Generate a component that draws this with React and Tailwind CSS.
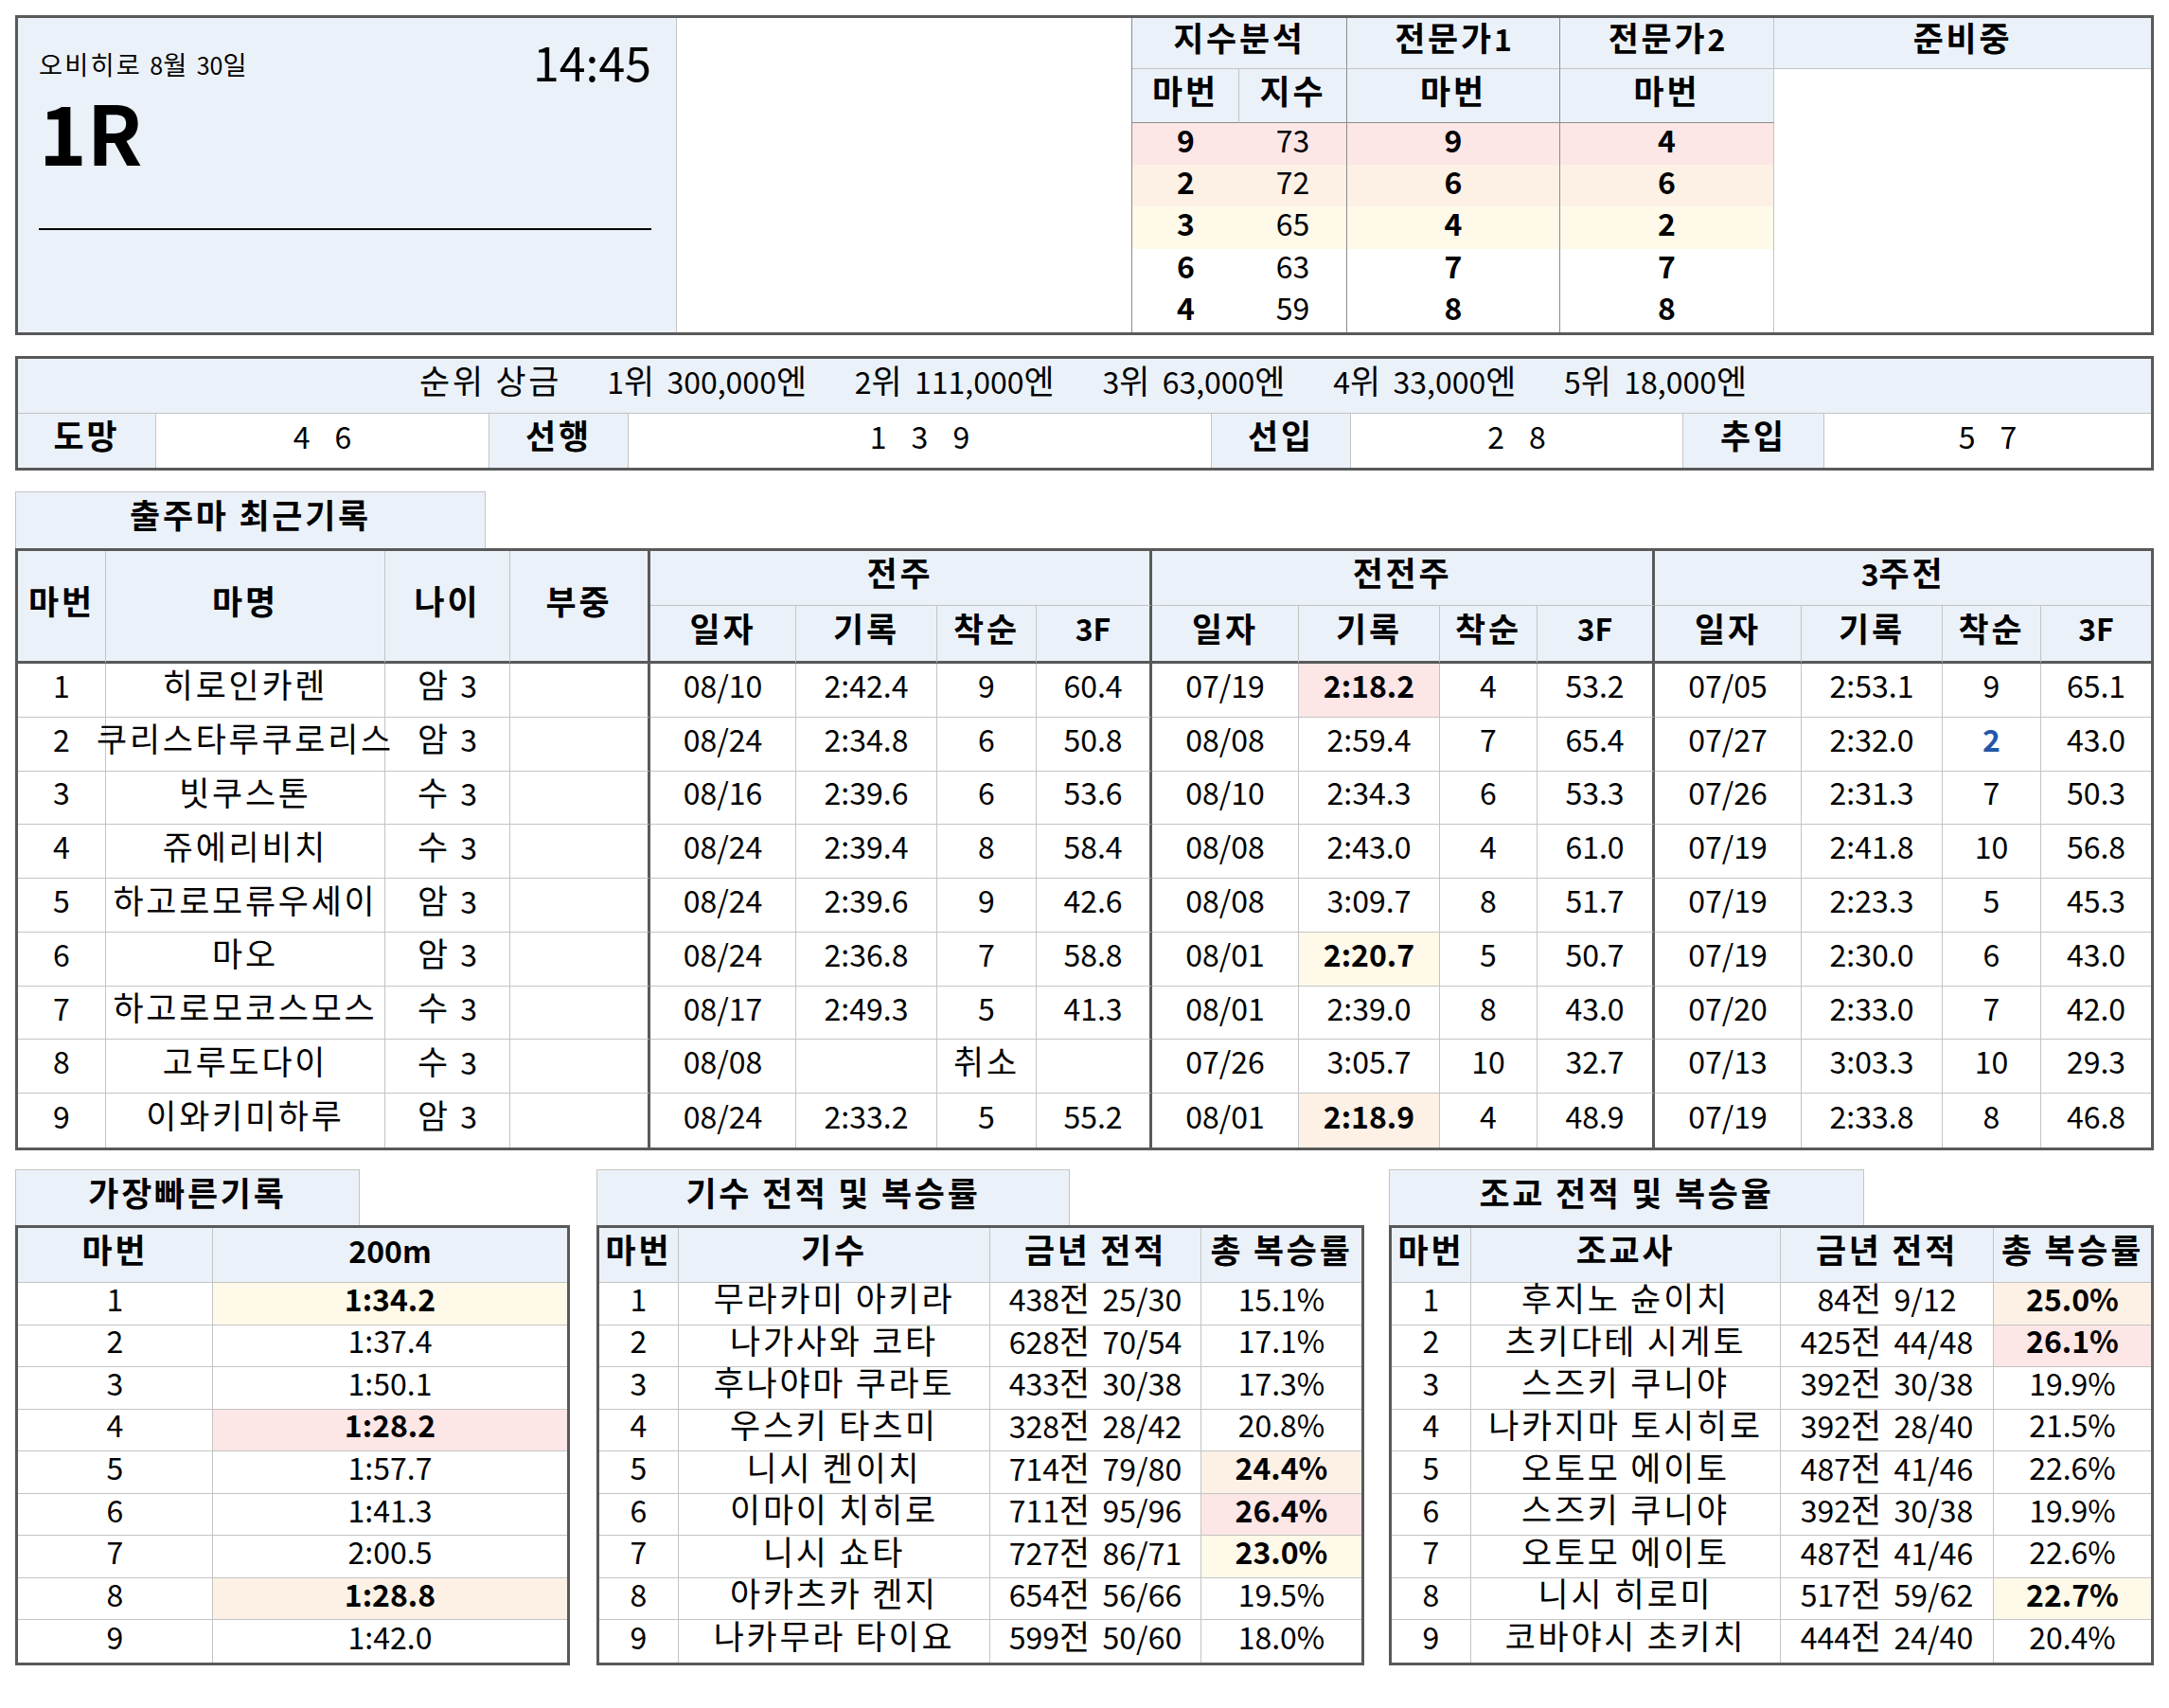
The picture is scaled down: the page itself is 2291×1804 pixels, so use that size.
import React from 'react';

const HL = { p: 'bg-[#fce6e6]', o: 'bg-[#fdf1e5]', y: 'bg-[#fef9e8]', '': '' };
const HDR = 'bg-[#ebf1f8]';
const FLEXC = 'flex flex-wrap content-center justify-center items-baseline whitespace-pre leading-none';
const CELL = `${FLEXC} border-[#c4c4c4] pb-[12px] min-h-0`;
const THICK_R = 'border-r-[3px] border-r-[#595959]';
const THICK_B = 'border-b-[3px] border-b-[#595959]';

const TOKEN = /[\uAC00-\uD7A3]+ *|[^\uAC00-\uD7A3]+/g;

function K({ t }) {
  if (typeof t !== 'string' || t === '') return null;
  const toks = t.match(TOKEN) || [];
  return (
    <>
      {toks.map((p, i) =>
        /[\uAC00-\uD7A3]/.test(p) ? (
          <span key={i} className="text-[1.09em] tracking-[0.08em] whitespace-pre">
            {p}
          </span>
        ) : (
          <span key={i} className="whitespace-pre">
            {p}
          </span>
        )
      )}
    </>
  );
}

function TopBox() {
  const rows = [
    ['9', '73', '9', '4', 'p'],
    ['2', '72', '6', '6', 'o'],
    ['3', '65', '4', '2', 'y'],
    ['6', '63', '7', '7', ''],
    ['4', '59', '8', '8', ''],
  ];
  const h = `bg-[#ebf1f8] ${FLEXC} font-bold text-[32px] border-[#c4c4c4] pb-[12px]`;
  const d = 'flex items-center justify-center text-[32px] leading-none pb-[10px] min-h-0';
  return (
    <div className="h-[338px] border-[3px] border-[#595959] grid grid-cols-[696px_481px_113px_114px_225px_226px_1fr] grid-rows-[54px_57px_repeat(5,minmax(0,1fr))]">
      <div className="row-span-7 bg-[#ebf1f8] border-r border-[#c4c4c4] pl-[22px] pr-[26px] pt-[20px]">
        <div className="flex justify-between items-start">
          <div className="text-[25px] leading-none mt-[15px]">
            <K t="오비히로 8월 30일" />
          </div>
          <div className="text-[50px] leading-none">14:45</div>
        </div>
        <div className="text-[86px] font-bold leading-none mt-[6px]">1R</div>
        <div className="h-[2px] bg-black mt-[60px]"></div>
      </div>
      <div className="row-span-7 border-r border-[#8c8c8c]"></div>
      <div className={`col-span-2 ${h} border-r border-b border-r-[#8c8c8c]`}><K t="지수분석" /></div>
      <div className={`${h} border-r border-b border-r-[#8c8c8c]`}><K t="전문가1" /></div>
      <div className={`${h} border-r border-b`}><K t="전문가2" /></div>
      <div className={`${h} border-b`}><K t="준비중" /></div>
      <div className={`${h} border-r border-b border-b-[#8c8c8c]`}><K t="마번" /></div>
      <div className={`${h} border-r border-b border-r-[#8c8c8c] border-b-[#8c8c8c]`}><K t="지수" /></div>
      <div className={`${h} border-r border-b border-r-[#8c8c8c] border-b-[#8c8c8c]`}><K t="마번" /></div>
      <div className={`${h} border-r border-b border-b-[#8c8c8c]`}><K t="마번" /></div>
      <div className="row-span-6"></div>
      {rows.map((r, i) => (
        <React.Fragment key={i}>
          <div className={`${d} font-bold ${HL[r[4]]}`}>{r[0]}</div>
          <div className={`${d} border-r border-[#8c8c8c] ${HL[r[4]]}`}>{r[1]}</div>
          <div className={`${d} font-bold border-r border-[#8c8c8c] ${HL[r[4]]}`}>{r[2]}</div>
          <div className={`${d} font-bold border-r border-[#c4c4c4] ${HL[r[4]]}`}>{r[3]}</div>
        </React.Fragment>
      ))}
    </div>
  );
}

function Prize() {
  const cats = [
    ['도망', ['4', '6']],
    ['선행', ['1', '3', '9']],
    ['선입', ['2', '8']],
    ['추입', ['5', '7']],
  ];
  const items = ['순위 상금', '1위 300,000엔', '2위 111,000엔', '3위 63,000엔', '4위 33,000엔', '5위 18,000엔'];
  return (
    <div className="mt-[22px] h-[121px] border-[3px] border-[#595959] grid grid-cols-[146px_352px_147px_616px_147px_351px_149px_1fr] grid-rows-[58px_1fr]">
      <div className="col-span-8 bg-[#ebf1f8] border-b border-[#c4c4c4] flex items-center justify-center gap-[48px] text-[32px] leading-none whitespace-nowrap pb-[12px]">
        {items.map((t) => (
          <div key={t} className="flex items-baseline">
            <K t={t} />
          </div>
        ))}
      </div>
      {cats.map(([label, vals], i) => (
        <React.Fragment key={label}>
          <div className={`bg-[#ebf1f8] border-r border-[#c4c4c4] ${FLEXC} font-bold text-[32px] pb-[12px]`}>
            <K t={label} />
          </div>
          <div className={`flex items-center justify-center gap-[26px] text-[32px] leading-none pb-[12px] ${i < 3 ? 'border-r border-[#c4c4c4]' : ''}`}>
            {vals.map((v) => (
              <span key={v}>{v}</span>
            ))}
          </div>
        </React.Fragment>
      ))}
    </div>
  );
}

const horses = [
  ['1', '히로인카렌', '암 3', '', ['08/10', '2:42.4', '9', '60.4'], ['07/19', '2:18.2', '4', '53.2'], ['07/05', '2:53.1', '9', '65.1']],
  ['2', '쿠리스타루쿠로리스', '암 3', '', ['08/24', '2:34.8', '6', '50.8'], ['08/08', '2:59.4', '7', '65.4'], ['07/27', '2:32.0', '2', '43.0']],
  ['3', '빗쿠스톤', '수 3', '', ['08/16', '2:39.6', '6', '53.6'], ['08/10', '2:34.3', '6', '53.3'], ['07/26', '2:31.3', '7', '50.3']],
  ['4', '쥬에리비치', '수 3', '', ['08/24', '2:39.4', '8', '58.4'], ['08/08', '2:43.0', '4', '61.0'], ['07/19', '2:41.8', '10', '56.8']],
  ['5', '하고로모류우세이', '암 3', '', ['08/24', '2:39.6', '9', '42.6'], ['08/08', '3:09.7', '8', '51.7'], ['07/19', '2:23.3', '5', '45.3']],
  ['6', '마오', '암 3', '', ['08/24', '2:36.8', '7', '58.8'], ['08/01', '2:20.7', '5', '50.7'], ['07/19', '2:30.0', '6', '43.0']],
  ['7', '하고로모코스모스', '수 3', '', ['08/17', '2:49.3', '5', '41.3'], ['08/01', '2:39.0', '8', '43.0'], ['07/20', '2:33.0', '7', '42.0']],
  ['8', '고루도다이', '수 3', '', ['08/08', '', '취소', ''], ['07/26', '3:05.7', '10', '32.7'], ['07/13', '3:03.3', '10', '29.3']],
  ['9', '이와키미하루', '암 3', '', ['08/24', '2:33.2', '5', '55.2'], ['08/01', '2:18.9', '4', '48.9'], ['07/19', '2:33.8', '8', '46.8']],
];

const mainHL = { '0-9': 'p', '5-9': 'y', '8-9': 'o' };

const COL_R = [
  'border-r', 'border-r', 'border-r', 'border-r-[3px] border-r-[#595959]',
  'border-r', 'border-r', 'border-r', 'border-r-[3px] border-r-[#595959]',
  'border-r', 'border-r', 'border-r', 'border-r-[3px] border-r-[#595959]',
  'border-r', 'border-r', 'border-r', '',
];

function MainTable() {
  const subs = ['일자', '기록', '착순', '3F'];
  return (
    <div>
      <div className={`mt-[22px] w-[497px] h-[60px] bg-[#ebf1f8] border border-b-0 border-[#c4c4c4] ${FLEXC} font-bold text-[32px] pb-[12px]`}>
        <K t="출주마 최근기록" />
      </div>
      <div className="h-[636px] border-[3px] border-[#595959] grid grid-cols-[93px_295px_132px_148px_154px_149px_105px_122px_155px_149px_103px_124px_155px_149px_104px_1fr] grid-rows-[58px_61px_repeat(9,minmax(0,1fr))] text-[32px]">
        {['마번', '마명', '나이', '부중'].map((t, i) => (
          <div key={t} className={`row-span-2 ${HDR} ${CELL} font-bold ${COL_R[i]} ${THICK_B}`}>
            <K t={t} />
          </div>
        ))}
        <div className={`col-span-4 ${HDR} ${CELL} font-bold border-b ${THICK_R}`}><K t="전주" /></div>
        <div className={`col-span-4 ${HDR} ${CELL} font-bold border-b ${THICK_R}`}><K t="전전주" /></div>
        <div className={`col-span-4 ${HDR} ${CELL} font-bold border-b`}><K t="3주전" /></div>
        {[0, 1, 2].map((g) =>
          subs.map((s, j) => (
            <div key={`${g}-${j}`} className={`${HDR} ${CELL} font-bold ${COL_R[4 + g * 4 + j]} ${THICK_B}`}>
              <K t={s} />
            </div>
          ))
        )}
        {horses.map((h, r) => {
          const vals = [h[0], h[1], h[2], h[3], ...h[4], ...h[5], ...h[6]];
          return vals.map((v, c) => {
            const hk = mainHL[`${r}-${c}`] || '';
            const blue = r === 1 && c === 14;
            const bold = hk !== '' || blue;
            return (
              <div
                key={`${r}-${c}`}
                className={`${CELL} ${COL_R[c]} ${r < 8 ? 'border-b' : ''} ${HL[hk]} ${bold ? 'font-bold' : ''} ${blue ? 'text-[#2356a8]' : ''}`}
              >
                <K t={v} />
              </div>
            );
          });
        })}
      </div>
    </div>
  );
}

function BottomTable({ title, titleW, tableW, gridCls, headers, rows, hlCol }) {
  const n = headers.length;
  return (
    <div style={{ width: tableW }} className="flex-none">
      <div
        style={{ width: titleW }}
        className={`h-[59px] bg-[#ebf1f8] border border-b-0 border-[#c4c4c4] ${FLEXC} font-bold text-[32px] pb-[12px]`}
      >
        <K t={title} />
      </div>
      <div className={`h-[465px] border-[3px] border-[#595959] grid ${gridCls} text-[32px]`}>
        {headers.map((t, i) => (
          <div key={t} className={`${HDR} ${CELL} font-bold border-b ${i < n - 1 ? 'border-r' : ''}`}>
            <K t={t} />
          </div>
        ))}
        {rows.map((row, r) => {
          const hk = row[n] || '';
          return row.slice(0, n).map((v, c) => (
            <div
              key={`${r}-${c}`}
              className={`${CELL} ${c < n - 1 ? 'border-r' : ''} ${r < 8 ? 'border-b' : ''} ${c === hlCol ? HL[hk] : ''} ${c === hlCol && hk ? 'font-bold' : ''}`}
            >
              <K t={v} />
            </div>
          ));
        })}
      </div>
    </div>
  );
}

const fastest = [
  ['1', '1:34.2', 'y'], ['2', '1:37.4'], ['3', '1:50.1'], ['4', '1:28.2', 'p'], ['5', '1:57.7'],
  ['6', '1:41.3'], ['7', '2:00.5'], ['8', '1:28.8', 'o'], ['9', '1:42.0'],
];

const jockeys = [
  ['1', '무라카미 아키라', '438전 25/30', '15.1%'],
  ['2', '나가사와 코타', '628전 70/54', '17.1%'],
  ['3', '후나야마 쿠라토', '433전 30/38', '17.3%'],
  ['4', '우스키 타츠미', '328전 28/42', '20.8%'],
  ['5', '니시 켄이치', '714전 79/80', '24.4%', 'o'],
  ['6', '이마이 치히로', '711전 95/96', '26.4%', 'p'],
  ['7', '니시 쇼타', '727전 86/71', '23.0%', 'y'],
  ['8', '아카츠카 켄지', '654전 56/66', '19.5%'],
  ['9', '나카무라 타이요', '599전 50/60', '18.0%'],
];

const trainers = [
  ['1', '후지노 슌이치', '84전 9/12', '25.0%', 'o'],
  ['2', '츠키다테 시게토', '425전 44/48', '26.1%', 'p'],
  ['3', '스즈키 쿠니야', '392전 30/38', '19.9%'],
  ['4', '나카지마 토시히로', '392전 28/40', '21.5%'],
  ['5', '오토모 에이토', '487전 41/46', '22.6%'],
  ['6', '스즈키 쿠니야', '392전 30/38', '19.9%'],
  ['7', '오토모 에이토', '487전 41/46', '22.6%'],
  ['8', '니시 히로미', '517전 59/62', '22.7%', 'y'],
  ['9', '코바야시 초키치', '444전 24/40', '20.4%'],
];

function Bottom() {
  return (
    <div className="mt-[20px] flex items-start">
      <BottomTable
        title="가장빠른기록"
        titleW={364}
        tableW={586}
        gridCls="grid-cols-[206px_1fr] grid-rows-[58px_repeat(9,minmax(0,1fr))]"
        headers={['마번', '200m']}
        rows={fastest}
        hlCol={1}
      />
      <div className="ml-[28px]">
        <BottomTable
          title="기수 전적 및 복승률"
          titleW={500}
          tableW={811}
          gridCls="grid-cols-[84px_329px_223px_1fr] grid-rows-[58px_repeat(9,minmax(0,1fr))]"
          headers={['마번', '기수', '금년 전적', '총 복승률']}
          rows={jockeys}
          hlCol={3}
        />
      </div>
      <div className="ml-[26px]">
        <BottomTable
          title="조교 전적 및 복승율"
          titleW={502}
          tableW={808}
          gridCls="grid-cols-[84px_327px_225px_1fr] grid-rows-[58px_repeat(9,minmax(0,1fr))]"
          headers={['마번', '조교사', '금년 전적', '총 복승률']}
          rows={trainers}
          hlCol={3}
        />
      </div>
    </div>
  );
}

export default function App() {
  return (
    <div className="w-[2291px] min-h-[1804px] bg-white text-black font-['Noto_Sans_CJK_KR',sans-serif] px-[16px] pt-[16px]">
      <TopBox />
      <Prize />
      <MainTable />
      <Bottom />
    </div>
  );
}
